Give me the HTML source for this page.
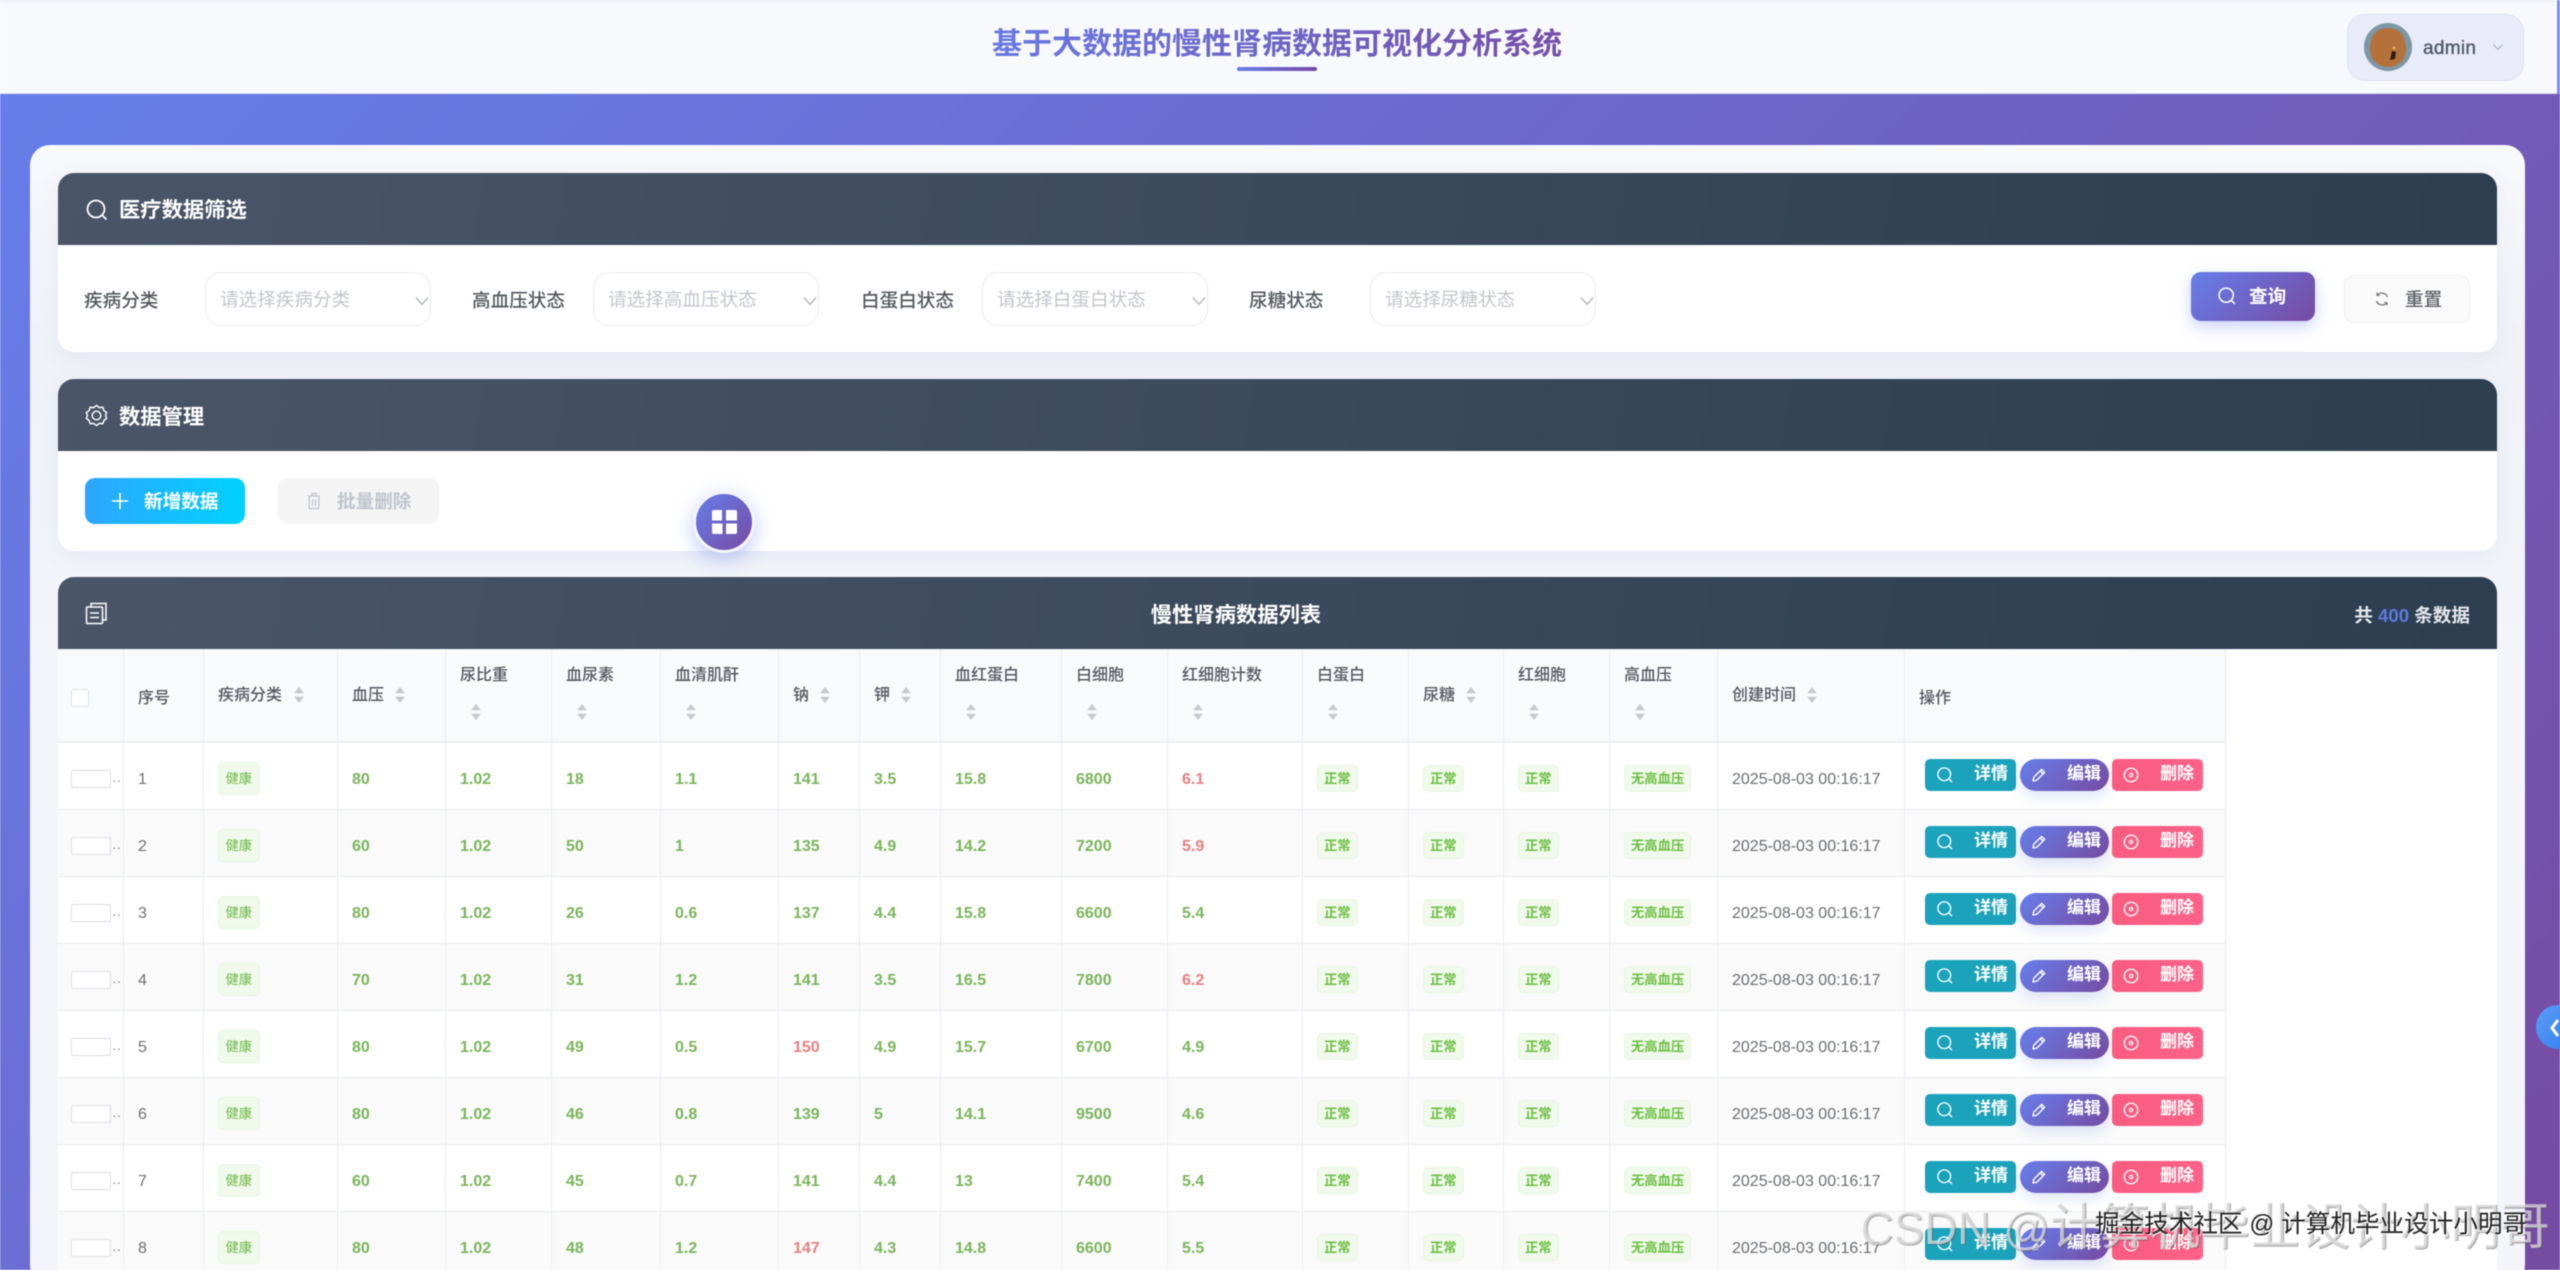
<!DOCTYPE html>
<html lang="zh-CN">
<head>
<meta charset="utf-8">
<title>基于大数据的慢性肾病数据可视化分析系统</title>
<style>
*{box-sizing:border-box;margin:0;padding:0}
html,body{width:2560px;height:1270px;overflow:hidden}
body{position:relative;font-family:"Liberation Sans","Noto Sans CJK SC",sans-serif;background:#fff}
.abs,.abs>*{position:absolute}
svg{display:block}
#root{filter:blur(.5px)}
#bg{left:0;top:94px;width:2560px;height:1176px;background:linear-gradient(135deg,#667eea 0%,#764ba2 100%)}
#top{left:0;top:0;width:2557px;height:94px;background:#f8f9fd;border-top:2px solid #eef0f6;border-bottom:1px solid #dfe3f3}
#edge{left:2557px;top:0;width:3px;height:94px;background:#7f8fe6}
#title{left:930px;top:23px;width:694px;text-align:center;font-size:30px;line-height:44px;font-weight:700;background:linear-gradient(90deg,#667eea,#764ba2);-webkit-background-clip:text;background-clip:text;color:transparent}
#uline{left:1237px;top:67px;width:80px;height:4px;border-radius:2px;background:linear-gradient(90deg,#667eea,#764ba2)}
#user{left:2347px;top:14px;width:177px;height:67px;border-radius:18px;background:#e9ecf8;border:1px solid #dde1f2}
#ava{left:2364px;top:23px;width:48px;height:48px;border-radius:50%;background:#7b95a6;overflow:hidden}
#uname{left:2423px;top:37px;font-size:19px;line-height:24px;color:#4d5568;font-weight:400;-webkit-text-stroke:.35px #4d5568;letter-spacing:.3px}
#card{left:30px;top:145px;width:2495px;height:1140px;border-radius:20px;background:linear-gradient(180deg,#f8f9fc 0,#f0f2f8 200px,#f3f5fb 500px)}
.sec{left:58px;width:2439px;background:#fff;border-radius:16px;box-shadow:0 6px 24px rgba(90,100,160,.08)}
.hd{left:0;top:0;width:100%;height:72px;border-radius:16px 16px 0 0;background:linear-gradient(100deg,#4a5568 0%,#2c3e50 100%)}
.hdt{left:61px;top:22px;font-size:21.3px;line-height:30px;font-weight:700;color:#fff;white-space:nowrap}
.lb{font-size:18.6px;line-height:26px;color:#54585f;white-space:nowrap;font-weight:500}
.sel{top:99px;width:226px;height:54px;border-radius:16px;background:#fff;border:1px solid #e9ebf1;font-size:18.6px;line-height:53px;color:#c3c6cc;padding-left:14px;white-space:nowrap}
.sel svg{position:absolute;right:0;top:20px}
#b1{left:2133px;top:99px;width:124px;height:49px;border-radius:10px;background:linear-gradient(135deg,#667eea,#764ba2);box-shadow:0 6px 16px rgba(102,126,234,.35);color:#fff;font-size:18.6px;font-weight:700;line-height:49px;padding-left:58px}
#b2{left:2286px;top:102px;width:126px;height:48px;border-radius:10px;background:#fafafb;border:1px solid #ebedf1;color:#5f6368;font-size:18.6px;font-weight:500;line-height:47px;padding-left:60px}
#add{left:27px;top:99px;width:160px;height:46px;border-radius:10px;background:linear-gradient(90deg,#2ea6ff,#00d2ff);color:#fff;font-size:18.6px;font-weight:700;line-height:48px;padding-left:59px}
#del{left:220px;top:99px;width:161px;height:46px;border-radius:10px;background:#f4f4f5;color:#c0c4cc;font-size:18.6px;font-weight:700;line-height:48px;padding-left:59px}
#ball{left:693px;top:491px;width:62px;height:62px;border-radius:50%;background:linear-gradient(135deg,#667eea,#764ba2);border:3px solid #f4f4fb;box-shadow:0 6px 20px rgba(102,126,234,.4)}
#tsec{left:58px;top:577px;width:2439px;height:720px;background:#fff;border-radius:16px}
#tt{left:0;top:23px;width:2356px;text-align:center;font-size:21.3px;line-height:30px;color:#fff;font-weight:700}
#tot{right:27px;top:25px;font-size:18.6px;line-height:28px;color:#e6e8ec;font-weight:700;white-space:nowrap}
#tot b{color:#5f79dc}
table{position:absolute;left:0;top:72px;border-collapse:separate;border-spacing:0;table-layout:fixed;width:2168px}
th{height:94px;background:#f8fafc;border-right:1px solid #e9ecf1;border-bottom:2px solid #eceef2;position:relative;font-weight:500;font-size:16px;color:#55595f;text-align:left}
th span{position:absolute;left:14px;white-space:nowrap;line-height:24px}
th span.a{top:35px}
th span.c{top:15px}
th svg{position:absolute}
th svg.a{top:38px}
th svg.c{top:55px;left:24px}
td{height:67px;border-right:1px solid #ebedf1;border-bottom:1px solid #e9ebef;padding:8px 0 0 14px;font-size:16px;white-space:nowrap;position:relative;color:#79b65a;font-weight:700}
tr:nth-child(even) td{background:#fafafa}
td.n{color:#6e7175;font-weight:400}
td.r{color:#e97f7f}
td.d{color:#6b6e73;font-weight:400}
.tg{display:inline-block;position:relative;top:-2px;height:27px;line-height:25px;padding:0 6px;border-radius:5px;background:#f0f9eb;border:1px solid #e7f4df;color:#6cc043;font-size:13.3px;font-weight:700;vertical-align:middle}
.h{height:33px;line-height:31px;font-weight:400;padding:0 6.5px;color:#6cb946;top:-2px}
.cb{position:absolute;left:13px;top:27px;width:40px;height:18px;background:#fff;border:1px solid #dcdfe6;border-radius:2px}
.dd{position:absolute;left:54px;top:28px;font-size:14px;line-height:18px;color:#888;font-style:normal;font-weight:400}
.op a{position:absolute;top:16px;height:32px;color:#fff;font-size:17px;font-weight:700;line-height:30px;white-space:nowrap}
.op svg{position:absolute;top:7px}
.o1{left:20px;width:91px;background:#1ba3bb;border-radius:5px;padding-left:49px}
.o1 svg{left:11px}
.o2{left:115px;width:89px;background:linear-gradient(135deg,#667eea,#764ba2);border-radius:16px;padding-left:47px;box-shadow:0 6px 14px rgba(102,126,234,.2)}
.o2 svg{left:10px}
.o3{left:207px;width:91px;background:linear-gradient(90deg,#fb5c80,#ff6289);border-radius:5px;padding-left:48px}
.o3 svg{left:10px}
#side{left:2536px;top:1005px;width:44px;height:44px;border-radius:50%;background:linear-gradient(135deg,#5c9cf5,#2f7ff0)}
#wm1{left:1860px;top:1197px;font-size:50px;line-height:60px;color:rgba(255,255,255,.6);text-shadow:1px 1px 1px rgba(90,90,90,.6);white-space:nowrap;font-weight:400}
#wm1 span{font-size:46px}
#wm2{left:2095px;top:1208px;font-size:24.6px;line-height:34px;color:#222;text-shadow:1px 1px 1px rgba(255,255,255,.95);white-space:nowrap}
</style>
</head>
<body>
<svg width="0" height="0" style="position:absolute">
<defs>
<symbol id="s" viewBox="0 0 24 24"><circle cx="11" cy="11" r="8.500" fill="none" stroke="currentColor" stroke-width="1.800"/><path d="M17 17l4 4" stroke="currentColor" stroke-width="1.800" fill="none" stroke-linecap="round"/></symbol>
<symbol id="e" viewBox="0 0 24 24"><path d="M4 20l1-5L15.500 4.500l4 4L9 19z M13.500 6.500l4 4" fill="none" stroke="currentColor" stroke-width="1.800" stroke-linejoin="round"/></symbol>
<symbol id="x" viewBox="0 0 24 24"><circle cx="12" cy="12" r="9" fill="none" stroke="currentColor" stroke-width="1.800"/><circle cx="12" cy="12" r="2.200" fill="none" stroke="currentColor" stroke-width="1.600"/></symbol>
<symbol id="v" viewBox="0 0 12 12"><path d="M1.500 3.500L6 8.500l4.500-5" fill="none" stroke="currentColor" stroke-width="1.100"/></symbol>
<symbol id="o" viewBox="0 0 12 18"><path d="M6 0l5.500 7H.5zM6 18L.5 11h11z" fill="#c6c8cd"/></symbol>
</defs>
</svg>

<div id="root" class="abs" style="left:0;top:0;width:2560px;height:1270px">
<div id="bg"></div>
<div id="top"></div>
<div id="edge"></div>
<div id="title">基于大数据的慢性肾病数据可视化分析系统</div>
<div id="uline"></div>
<div id="user"></div>
<div id="ava"><svg width="48" height="48" viewBox="0 0 48 48"><circle cx="24" cy="24" r="24" fill="#7e98a8"/><path d="M6 26C6 12 13 5 24 5s18 8 18 21c0 11-8 18-18 18S6 37 6 26z" fill="#b5713a"/><path d="M28 28l4 1-1 7-5 1z" fill="#2d1d12"/><circle cx="30" cy="25" r="1.500" fill="#e0b060"/></svg></div>
<div id="uname">admin</div>
<svg style="left:2492px;top:41px;color:#a9aec4" width="12" height="12"><use href="#v"/></svg>
<div id="card"></div>

<div class="sec abs" style="top:173px;height:179px">
 <div class="hd"></div>
 <svg style="left:27px;top:25px;color:#fff" width="24" height="24"><use href="#s"/></svg>
 <div class="hdt">医疗数据筛选</div>
 <div class="lb" style="left:26px;top:115px">疾病分类</div>
 <div class="sel" style="left:147px">请选择疾病分类<svg style="color:#b4b7bd" width="16" height="16"><use href="#v"/></svg></div>
 <div class="lb" style="left:414px;top:115px">高血压状态</div>
 <div class="sel" style="left:535px">请选择高血压状态<svg style="color:#b4b7bd" width="16" height="16"><use href="#v"/></svg></div>
 <div class="lb" style="left:803px;top:115px">白蛋白状态</div>
 <div class="sel" style="left:924px">请选择白蛋白状态<svg style="color:#b4b7bd" width="16" height="16"><use href="#v"/></svg></div>
 <div class="lb" style="left:1191px;top:115px">尿糖状态</div>
 <div class="sel" style="left:1312px">请选择尿糖状态<svg style="color:#b4b7bd" width="16" height="16"><use href="#v"/></svg></div>
 <div id="b1">查询</div>
 <svg style="left:2159px;top:113px;color:#fff" width="20" height="20"><use href="#s"/></svg>
 <div id="b2">重置</div>
 <svg style="left:2316px;top:118px" width="16" height="16" viewBox="0 0 16 16"><path d="M13.500 6A6 6 0 0 0 3 4.500M2.500 10A6 6 0 0 0 13 11.500" fill="none" stroke="#777" stroke-width="1.300"/><path d="M3 1.500v3h3M13 14.500v-3h-3" fill="none" stroke="#777" stroke-width="1.100"/></svg>
</div>

<div class="sec abs" style="top:379px;height:172px">
 <div class="hd"></div>
 <svg style="left:27px;top:25px" width="23" height="23" viewBox="0 0 24 24"><path d="M12 1.500l3 2.300 3.600-.4 1 3.300 3 2.300-1.200 3 1.200 3-3 2.300-1 3.300-3.600-.4-3 2.300-3-2.300-3.600.4-1-3.300-3-2.300 1.200-3-1.200-3 3-2.300 1-3.300 3.600.4z" fill="none" stroke="#fff" stroke-width="1.500" stroke-linejoin="round"/><circle cx="12" cy="12" r="4.500" fill="none" stroke="#fff" stroke-width="1.500"/></svg>
 <div class="hdt" style="top:23px">数据管理</div>
 <div id="add">新增数据</div>
 <svg style="left:54px;top:114px" width="16" height="16"><path d="M8 0v16M0 8h16" stroke="#fff" stroke-width="1.600"/></svg>
 <div id="del">批量删除</div>
 <svg style="left:247px;top:113px" width="18" height="18" viewBox="0 0 18 18"><path d="M3 4h12M7 4V1.500h4V4M4.200 4v12.500h9.600V4M7.500 7.500v6M10.500 7.500v6" fill="none" stroke="#c0c4cc" stroke-width="1.300"/></svg>
</div>

<div id="tsec">
 <div class="abs" style="left:0;top:0;width:100%;height:72px">
  <div class="hd"></div>
  <svg style="left:27px;top:25px" width="23" height="23" viewBox="0 0 23 23"><path d="M6 5V1.500h15v16.500h-3" fill="none" stroke="#fff" stroke-width="1.500"/><rect x="1.500" y="5" width="16" height="16.500" rx="1" fill="none" stroke="#fff" stroke-width="1.500"/><path d="M5 11h9M5 15.500h9" stroke="#fff" stroke-width="1.500"/></svg>
  <div id="tt">慢性肾病数据列表</div>
  <div id="tot">共 <b>400</b> 条数据</div>
 </div>
 <table>
 <colgroup><col style="width:66px"><col style="width:80px"><col style="width:134px"><col style="width:108px"><col style="width:106px"><col style="width:109px"><col style="width:118px"><col style="width:81px"><col style="width:81px"><col style="width:121px"><col style="width:106px"><col style="width:135px"><col style="width:106px"><col style="width:95px"><col style="width:106px"><col style="width:108px"><col style="width:187px"><col style="width:321px"></colgroup>
 <thead><tr>
 <th><i style="position:absolute;left:13px;top:40px;width:18px;height:18px;border:1px solid #dcdfe6;border-radius:3px;background:#fff"></i></th>
 <th><span style="top:38px">序号</span></th>
 <th><span class="a">疾病分类</span><svg class="a" style="left:89px" width="12" height="16"><use href="#o"/></svg></th>
 <th><span class="a">血压</span><svg class="a" style="left:56px" width="12" height="16"><use href="#o"/></svg></th>
 <th><span class="c">尿比重</span><svg class="c" width="12" height="16"><use href="#o"/></svg></th>
 <th><span class="c">血尿素</span><svg class="c" width="12" height="16"><use href="#o"/></svg></th>
 <th><span class="c">血清肌酐</span><svg class="c" width="12" height="16"><use href="#o"/></svg></th>
 <th><span class="a">钠</span><svg class="a" style="left:40px" width="12" height="16"><use href="#o"/></svg></th>
 <th><span class="a">钾</span><svg class="a" style="left:40px" width="12" height="16"><use href="#o"/></svg></th>
 <th><span class="c">血红蛋白</span><svg class="c" width="12" height="16"><use href="#o"/></svg></th>
 <th><span class="c">白细胞</span><svg class="c" width="12" height="16"><use href="#o"/></svg></th>
 <th><span class="c">红细胞计数</span><svg class="c" width="12" height="16"><use href="#o"/></svg></th>
 <th><span class="c">白蛋白</span><svg class="c" width="12" height="16"><use href="#o"/></svg></th>
 <th><span class="a">尿糖</span><svg class="a" style="left:56px" width="12" height="16"><use href="#o"/></svg></th>
 <th><span class="c">红细胞</span><svg class="c" width="12" height="16"><use href="#o"/></svg></th>
 <th><span class="c">高血压</span><svg class="c" width="12" height="16"><use href="#o"/></svg></th>
 <th><span class="a">创建时间</span><svg class="a" style="left:88px" width="12" height="16"><use href="#o"/></svg></th>
 <th><span style="top:38px">操作</span></th>
 </tr></thead>
 <tbody>
 <tr><td><i class="cb"></i><i class="dd">··</i></td><td class="n">1</td><td><span class="tg h">健康</span></td><td>80</td><td>1.02</td><td>18</td><td>1.1</td><td>141</td><td>3.5</td><td>15.8</td><td>6800</td><td class="r">6.1</td><td><span class="tg">正常</span></td><td><span class="tg">正常</span></td><td><span class="tg">正常</span></td><td><span class="tg">无高血压</span></td><td class="d">2025-08-03 00:16:17</td><td class="op"><a class="o1"><svg width="18" height="18"><use href="#s"/></svg>详情</a><a class="o2"><svg width="18" height="18"><use href="#e"/></svg>编辑</a><a class="o3"><svg width="18" height="18"><use href="#x"/></svg>删除</a></td></tr>
 <tr><td><i class="cb"></i><i class="dd">··</i></td><td class="n">2</td><td><span class="tg h">健康</span></td><td>60</td><td>1.02</td><td>50</td><td>1</td><td>135</td><td>4.9</td><td>14.2</td><td>7200</td><td class="r">5.9</td><td><span class="tg">正常</span></td><td><span class="tg">正常</span></td><td><span class="tg">正常</span></td><td><span class="tg">无高血压</span></td><td class="d">2025-08-03 00:16:17</td><td class="op"><a class="o1"><svg width="18" height="18"><use href="#s"/></svg>详情</a><a class="o2"><svg width="18" height="18"><use href="#e"/></svg>编辑</a><a class="o3"><svg width="18" height="18"><use href="#x"/></svg>删除</a></td></tr>
 <tr><td><i class="cb"></i><i class="dd">··</i></td><td class="n">3</td><td><span class="tg h">健康</span></td><td>80</td><td>1.02</td><td>26</td><td>0.6</td><td>137</td><td>4.4</td><td>15.8</td><td>6600</td><td>5.4</td><td><span class="tg">正常</span></td><td><span class="tg">正常</span></td><td><span class="tg">正常</span></td><td><span class="tg">无高血压</span></td><td class="d">2025-08-03 00:16:17</td><td class="op"><a class="o1"><svg width="18" height="18"><use href="#s"/></svg>详情</a><a class="o2"><svg width="18" height="18"><use href="#e"/></svg>编辑</a><a class="o3"><svg width="18" height="18"><use href="#x"/></svg>删除</a></td></tr>
 <tr><td><i class="cb"></i><i class="dd">··</i></td><td class="n">4</td><td><span class="tg h">健康</span></td><td>70</td><td>1.02</td><td>31</td><td>1.2</td><td>141</td><td>3.5</td><td>16.5</td><td>7800</td><td class="r">6.2</td><td><span class="tg">正常</span></td><td><span class="tg">正常</span></td><td><span class="tg">正常</span></td><td><span class="tg">无高血压</span></td><td class="d">2025-08-03 00:16:17</td><td class="op"><a class="o1"><svg width="18" height="18"><use href="#s"/></svg>详情</a><a class="o2"><svg width="18" height="18"><use href="#e"/></svg>编辑</a><a class="o3"><svg width="18" height="18"><use href="#x"/></svg>删除</a></td></tr>
 <tr><td><i class="cb"></i><i class="dd">··</i></td><td class="n">5</td><td><span class="tg h">健康</span></td><td>80</td><td>1.02</td><td>49</td><td>0.5</td><td class="r">150</td><td>4.9</td><td>15.7</td><td>6700</td><td>4.9</td><td><span class="tg">正常</span></td><td><span class="tg">正常</span></td><td><span class="tg">正常</span></td><td><span class="tg">无高血压</span></td><td class="d">2025-08-03 00:16:17</td><td class="op"><a class="o1"><svg width="18" height="18"><use href="#s"/></svg>详情</a><a class="o2"><svg width="18" height="18"><use href="#e"/></svg>编辑</a><a class="o3"><svg width="18" height="18"><use href="#x"/></svg>删除</a></td></tr>
 <tr><td><i class="cb"></i><i class="dd">··</i></td><td class="n">6</td><td><span class="tg h">健康</span></td><td>80</td><td>1.02</td><td>46</td><td>0.8</td><td>139</td><td>5</td><td>14.1</td><td>9500</td><td>4.6</td><td><span class="tg">正常</span></td><td><span class="tg">正常</span></td><td><span class="tg">正常</span></td><td><span class="tg">无高血压</span></td><td class="d">2025-08-03 00:16:17</td><td class="op"><a class="o1"><svg width="18" height="18"><use href="#s"/></svg>详情</a><a class="o2"><svg width="18" height="18"><use href="#e"/></svg>编辑</a><a class="o3"><svg width="18" height="18"><use href="#x"/></svg>删除</a></td></tr>
 <tr><td><i class="cb"></i><i class="dd">··</i></td><td class="n">7</td><td><span class="tg h">健康</span></td><td>60</td><td>1.02</td><td>45</td><td>0.7</td><td>141</td><td>4.4</td><td>13</td><td>7400</td><td>5.4</td><td><span class="tg">正常</span></td><td><span class="tg">正常</span></td><td><span class="tg">正常</span></td><td><span class="tg">无高血压</span></td><td class="d">2025-08-03 00:16:17</td><td class="op"><a class="o1"><svg width="18" height="18"><use href="#s"/></svg>详情</a><a class="o2"><svg width="18" height="18"><use href="#e"/></svg>编辑</a><a class="o3"><svg width="18" height="18"><use href="#x"/></svg>删除</a></td></tr>
 <tr><td><i class="cb"></i><i class="dd">··</i></td><td class="n">8</td><td><span class="tg h">健康</span></td><td>80</td><td>1.02</td><td>48</td><td>1.2</td><td class="r">147</td><td>4.3</td><td>14.8</td><td>6600</td><td>5.5</td><td><span class="tg">正常</span></td><td><span class="tg">正常</span></td><td><span class="tg">正常</span></td><td><span class="tg">无高血压</span></td><td class="d">2025-08-03 00:16:17</td><td class="op"><a class="o1"><svg width="18" height="18"><use href="#s"/></svg>详情</a><a class="o2"><svg width="18" height="18"><use href="#e"/></svg>编辑</a><a class="o3"><svg width="18" height="18"><use href="#x"/></svg>删除</a></td></tr>
 </tbody>
 </table>
</div>

<div id="ball"></div>
<svg style="left:712px;top:510px" width="25" height="24"><path d="M0 2a2 2 0 0 1 2-2h8v10.500H0zM14 0h9a2 2 0 0 1 2 2v8.500H14zM0 13.500h10.500V24H2a2 2 0 0 1-2-2zM14 13.500h11V22a2 2 0 0 1-2 2h-9z" fill="#fff"/></svg>
<div id="side"></div>
<svg style="left:2549px;top:1018px" width="11" height="20"><path d="M9 2L3 10l6 8" fill="none" stroke="#fff" stroke-width="3"/></svg>
<div id="wm1"><span>CSDN @</span>计算机毕业设计小明哥</div>
<div id="wm2">掘金技术社区 @ 计算机毕业设计小明哥</div>
</div>
</body>
</html>
